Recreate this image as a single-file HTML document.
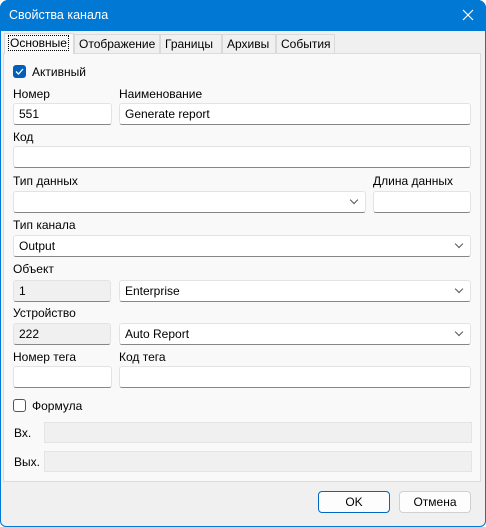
<!DOCTYPE html>
<html><head><meta charset="utf-8"><style>
*{box-sizing:border-box;margin:0;padding:0}
body{width:486px;height:527px;background:#fff;font-family:"Liberation Sans",sans-serif;font-size:12px;color:#000;position:relative;overflow:hidden}
.win{position:absolute;left:0;top:0;width:486px;height:527px;border-radius:8px 8px 6px 6px;background:#f0f0f0;overflow:hidden;box-shadow:inset 0 0 0 1px #0078d4}
.title{position:absolute;left:0;top:0;width:486px;height:31px;background:#0078d4;color:#fff;font-size:12.5px}
.title span{position:absolute;left:9px;top:8px}
.x{position:absolute;right:10px;top:7px}
.panel{position:absolute;left:3px;top:53px;width:478px;height:429px;background:#f9f9f9;border:1px solid #dcdcdc}
.tab{position:absolute;top:34px;height:19px;border:1px solid #dadada;border-bottom:none;background:#f0f0f0;padding:2px 4px;font-size:12px}
.tab.a{background:#f9f9f9;height:21px;top:33px;z-index:2}
.tab.a span{outline:1px dotted #000;padding:0 1px}
.l{position:absolute;font-size:12px}
.i{position:absolute;background:#fff;border:1px solid #e3e3e3;border-bottom:1px solid #868686;border-radius:3px;height:22px;padding:3px 5px;font-size:12px}
.d{background:#f0f0f0}
.s:after{content:"";position:absolute;right:8px;top:5px;width:5px;height:5px;border-right:1px solid #555;border-bottom:1px solid #555;transform:rotate(45deg)}
.cb{position:absolute;width:13px;height:13px;border-radius:3px}
.g{position:absolute;background:#f0f0f0;border:1px solid #e4e4e4;height:21px}
.btn{position:absolute;top:491px;height:22px;width:72px;background:#fdfdfd;border:1px solid #d0d0d0;border-radius:4px;text-align:center;padding-top:3px}
</style></head><body><div class="win">
<div class="title"><span>Свойства канала</span>
<svg class="x" width="16" height="16" viewBox="0 0 16 16"><path d="M3 3L13 13M13 3L3 13" stroke="#fff" stroke-width="1.2"/></svg></div>
<div class="tab a" style="left:4px;width:70px"><span>Основные</span></div>
<div class="tab" style="left:74px;width:86px">Отображение</div>
<div class="tab" style="left:160px;width:62px">Границы</div>
<div class="tab" style="left:222px;width:54px">Архивы</div>
<div class="tab" style="left:276px;width:59px">События</div>
<div class="panel"></div>
<div class="cb" style="left:13px;top:65px;background:#005fb8"><svg width="13" height="13"><path d="M3 6.5L5.5 9L10 4" stroke="#fff" stroke-width="1.3" fill="none"/></svg></div>
<div class="l" style="left:32px;top:65px">Активный</div>
<div class="l" style="left:13px;top:87px">Номер</div>
<div class="l" style="left:119px;top:87px">Наименование</div>
<div class="i" style="left:13px;top:103px;width:99px">551</div>
<div class="i" style="left:119px;top:103px;width:352px">Generate report</div>
<div class="l" style="left:13px;top:130px">Код</div>
<div class="i" style="left:13px;top:146px;width:458px"></div>
<div class="l" style="left:13px;top:174px">Тип данных</div>
<div class="l" style="left:373px;top:174px">Длина данных</div>
<div class="i s" style="left:13px;top:191px;width:353px"></div>
<div class="i" style="left:373px;top:191px;width:98px"></div>
<div class="l" style="left:13px;top:218px">Тип канала</div>
<div class="i s" style="left:13px;top:235px;width:458px">Output</div>
<div class="l" style="left:13px;top:262px">Объект</div>
<div class="i d" style="left:13px;top:280px;width:98px">1</div>
<div class="i s" style="left:119px;top:280px;width:352px">Enterprise</div>
<div class="l" style="left:13px;top:306px">Устройство</div>
<div class="i d" style="left:13px;top:323px;width:98px">222</div>
<div class="i s" style="left:119px;top:323px;width:352px">Auto Report</div>
<div class="l" style="left:13px;top:350px">Номер тега</div>
<div class="l" style="left:119px;top:350px">Код тега</div>
<div class="i" style="left:13px;top:366px;width:99px"></div>
<div class="i" style="left:119px;top:366px;width:352px"></div>
<div class="cb" style="left:13px;top:399px;border:1px solid #555;background:#fff"></div>
<div class="l" style="left:32px;top:399px">Формула</div>
<div class="l" style="left:14px;top:426px">Вх.</div>
<div class="g" style="left:44px;top:422px;width:428px"></div>
<div class="l" style="left:14px;top:455px">Вых.</div>
<div class="g" style="left:44px;top:451px;width:428px"></div>
<div class="btn" style="left:318px;border:1px solid #0067c0">OK</div>
<div class="btn" style="left:399px">Отмена</div>
</div></body></html>
